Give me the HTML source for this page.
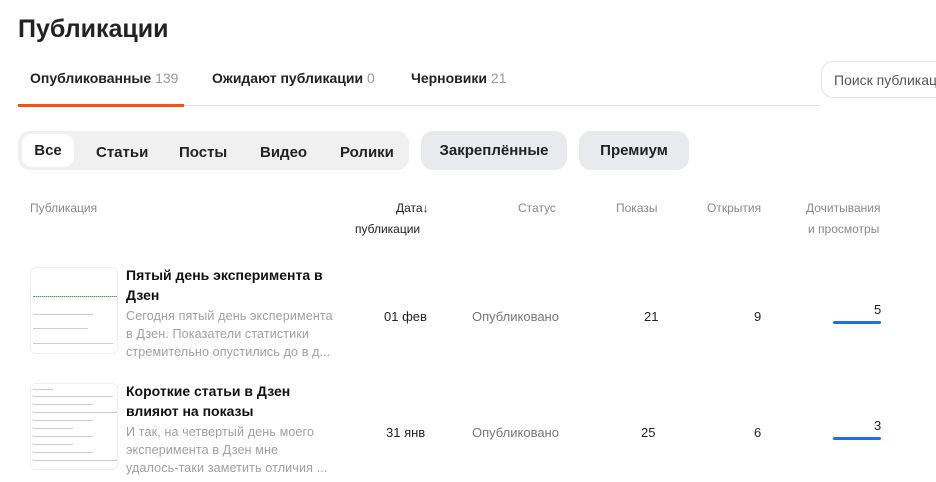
<!DOCTYPE html><html><head><meta charset="utf-8"><style>
*{margin:0;padding:0;box-sizing:border-box}
body{width:936px;height:482px;overflow:hidden;background:#fff;font-family:"Liberation Sans",sans-serif;color:#222;position:relative}
.a{position:absolute;white-space:nowrap}
.g{color:#999}
.h{font-size:12px;color:#888}
.pill{position:absolute;top:131px;height:39px;border-radius:12px;background:#e9eaed;font-size:15px;font-weight:bold;display:flex;align-items:center;justify-content:center;color:#222}
.t{font-size:14px;font-weight:bold;line-height:20px;color:#111}
.d{font-size:12.6px;line-height:18px;color:#a0a0a0;letter-spacing:0.1px}
.v{font-size:13px;color:#222}
.thumb{position:absolute;left:30px;width:88px;height:87px;border:1px solid #eee;border-radius:6px;background:#fff;overflow:hidden}
.thumb i{position:absolute;left:2px;height:1px;background:#ccc;display:block}
.bar{position:absolute;left:833px;width:48px;height:3px;background:#1f6fe5;border-radius:2px}
</style></head><body>
<div class="a" style="left:18px;top:15px;font-size:25px;font-weight:bold;color:#222">Публикации</div>
<div class="a" style="left:30px;top:70px;font-size:14px;font-weight:bold">Опубликованные <span class="g" style="font-weight:normal">139</span></div>
<div class="a" style="left:212px;top:70px;font-size:14px;font-weight:bold">Ожидают публикации <span class="g" style="font-weight:normal">0</span></div>
<div class="a" style="left:411px;top:70px;font-size:14px;font-weight:bold">Черновики <span class="g" style="font-weight:normal">21</span></div>
<div class="a" style="left:18px;top:105px;width:802px;height:1px;background:#e2e2e2"></div>
<div class="a" style="left:18px;top:104px;width:166px;height:3px;background:#fc4e12"></div>
<div class="a" style="left:821px;top:61px;width:140px;height:37px;border:1px solid #e6e6e6;border-radius:12px"></div>
<div class="a" style="left:834px;top:72px;font-size:14px;color:#555">Поиск публикаций</div>
<div class="pill" style="left:18px;width:391px;background:#f0f0f0"></div>
<div class="pill" style="left:22px;top:134px;height:33px;width:52px;background:#fff;border-radius:10px;font-weight:600">Все</div>
<div class="a" style="left:96px;top:144px;font-size:15px;font-weight:600">Статьи</div>
<div class="a" style="left:179px;top:144px;font-size:15px;font-weight:600">Посты</div>
<div class="a" style="left:260px;top:144px;font-size:15px;font-weight:600">Видео</div>
<div class="a" style="left:340px;top:144px;font-size:15px;font-weight:600">Ролики</div>
<div class="pill" style="left:421px;width:146px">Закреплённые</div>
<div class="pill" style="left:579px;width:110px">Премиум</div>
<div class="a h" style="left:30px;top:201px">Публикация</div>
<div class="a" style="left:396px;top:201px;font-size:12px;color:#222">Дата↓</div>
<div class="a" style="left:355px;top:222px;font-size:12px;color:#222">публикации</div>
<div class="a h" style="left:518px;top:201px">Статус</div>
<div class="a h" style="left:616px;top:201px">Показы</div>
<div class="a h" style="left:707px;top:201px">Открытия</div>
<div class="a h" style="left:806px;top:201px">Дочитывания</div>
<div class="a h" style="left:808px;top:222px">и просмотры</div>

<div class="thumb" style="top:267px"><i style="top:28px;width:84px;background:#9fd9a9;border-top:1px dotted #3bb34a"></i><i style="top:46px;width:60px"></i><i style="top:60px;width:55px"></i><i style="top:75px;width:80px"></i></div>
<div class="a t" style="left:126px;top:265px">Пятый день эксперимента в<br>Дзен</div>
<div class="a d" style="left:126px;top:307px">Сегодня пятый день эксперимента<br>в Дзен. Показатели статистики<br>стремительно опустились до в д...</div>
<div class="a v" style="left:384px;top:309px">01 фев</div>
<div class="a v" style="left:472px;top:309px;color:#777">Опубликовано</div>
<div class="a v" style="left:644px;top:309px">21</div>
<div class="a v" style="left:754px;top:309px">9</div>
<div class="a v" style="left:874px;top:302px">5</div>
<div class="bar" style="top:321px"></div>

<div class="thumb" style="top:383px"><i style="top:5px;width:20px"></i><i style="top:12px;width:80px"></i><i style="top:20px;width:60px"></i><i style="top:28px;width:84px"></i><i style="top:36px;width:60px"></i><i style="top:44px;width:40px"></i><i style="top:52px;width:60px"></i><i style="top:60px;width:40px"></i><i style="top:68px;width:60px"></i><i style="top:76px;width:84px"></i></div>
<div class="a t" style="left:126px;top:381px">Короткие статьи в Дзен<br>влияют на показы</div>
<div class="a d" style="left:126px;top:423px">И так, на четвертый день моего<br>эксперимента в Дзен мне<br>удалось-таки заметить отличия ...</div>
<div class="a v" style="left:386px;top:425px">31 янв</div>
<div class="a v" style="left:472px;top:425px;color:#777">Опубликовано</div>
<div class="a v" style="left:641px;top:425px">25</div>
<div class="a v" style="left:754px;top:425px">6</div>
<div class="a v" style="left:874px;top:418px">3</div>
<div class="bar" style="top:437px"></div>
</body></html>
